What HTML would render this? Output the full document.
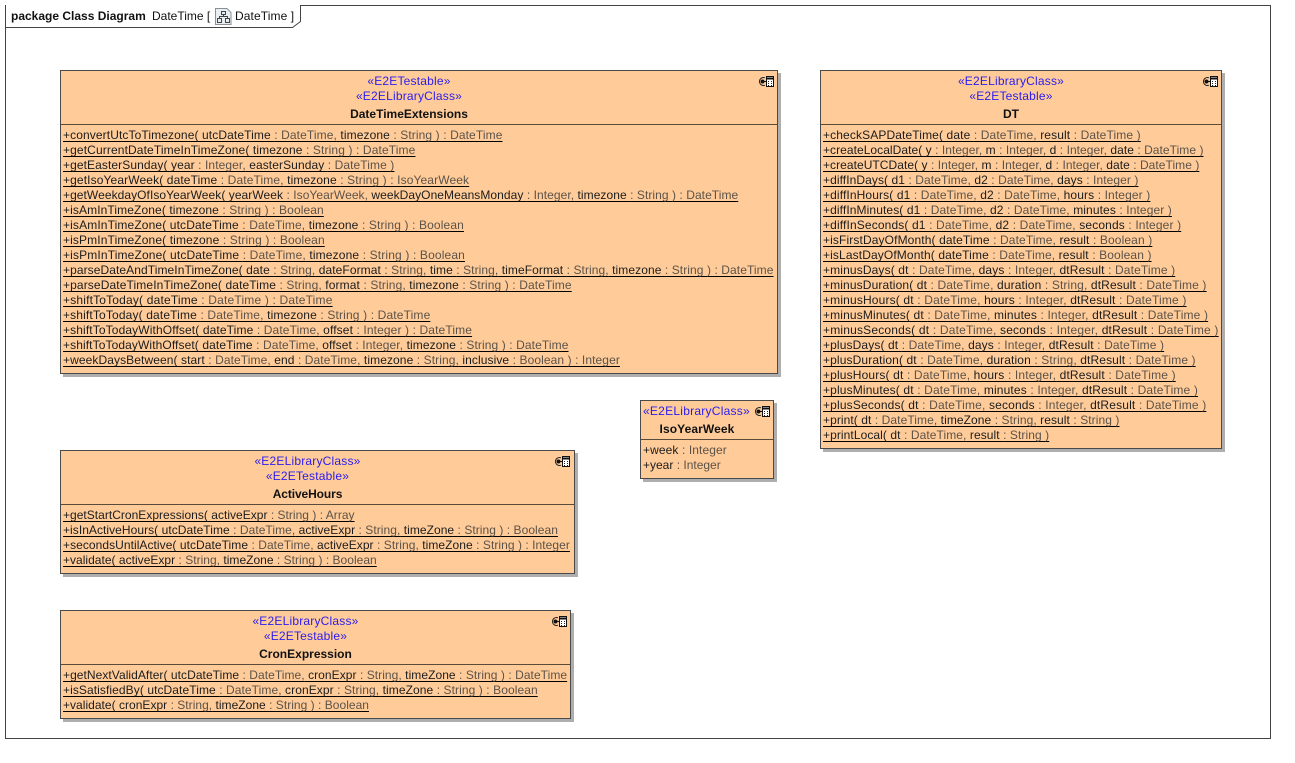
<!DOCTYPE html>
<html><head><meta charset="utf-8">
<style>
html,body{margin:0;padding:0;background:#fff;width:1295px;height:763px;overflow:hidden}
body{position:relative;font-family:"Liberation Sans",Arial,sans-serif;font-size:12px;color:#1c1c1c}
.a{position:absolute;white-space:nowrap}
.box{position:absolute;box-sizing:border-box;background:#ffcc99;border:1px solid #4a4a4a;box-shadow:3px 3px 0 #aeaeae}
.div{position:absolute;left:0;right:0;height:1px;background:#5a4a3a}
.st{position:absolute;left:0;right:20px;text-align:center;color:#2a1cf0;line-height:15px;white-space:nowrap;letter-spacing:.2px}
.nm{position:absolute;left:0;right:20px;text-align:center;font-weight:bold;color:#111;line-height:15px;white-space:nowrap}
.r{position:absolute;left:2px;margin-top:1px;line-height:15px;height:15px;white-space:nowrap;letter-spacing:.105px;text-decoration:underline;text-decoration-color:#000;text-decoration-thickness:1px;text-underline-offset:2px}
.r i{font-style:normal;color:#5c5248}
.n{position:absolute;left:2px;margin-top:1px;line-height:15px;height:15px;white-space:nowrap;letter-spacing:.1px}
.n i{font-style:normal;color:#5c5248}
svg{position:absolute}
</style></head><body>

<div class="a" style="left:5px;top:5px;width:1264px;height:732px;border:1px solid #444"></div>
<svg style="left:5px;top:5px" width="300" height="24"><path d="M0 0H295V16L287 22H0Z" fill="#fff"/><path d="M.5 22.500H287.500L295.500 16.500V.5" fill="none" stroke="#444"/><path d="M.5 0V23" stroke="#444"/></svg>
<div class="a" style="left:11px;top:9px;line-height:15px;font-weight:bold;color:#111">package Class Diagram</div>
<div class="a" style="left:152px;top:9px;line-height:15px;color:#111">DateTime [</div>
<svg style="left:215px;top:8px" width="17" height="17"><path d="M.5.5H12L16 4.500V16.500H.5Z" fill="#e8eef2" stroke="#8a9098"/><path d="M6.500 3.500H10.500V6.500H6.500ZM2.500 10.500H6.500V14.500H2.500ZM10.500 10.500H14.500V14.500H10.500ZM8.500 6.500V8.500H4.500V10.500M8.500 8.500H12.500V10.500" fill="none" stroke="#444"/></svg>
<div class="a" style="left:235px;top:9px;line-height:15px;color:#111;letter-spacing:.1px">DateTime ]</div>

<!-- DateTimeExtensions -->
<div class="box" style="left:60px;top:70px;width:718px;height:304px">
<div class="st" style="top:3px">«E2ETestable»</div>
<div class="st" style="top:18px">«E2ELibraryClass»</div>
<div class="nm" style="top:36px">DateTimeExtensions</div>
<svg style="left:697px;top:5px" width="17" height="13"><use href="#ic"/></svg>
<div class="div" style="top:53px"></div>
<div class="r" style="top:56px">+convertUtcToTimezone( utcDateTime <i>: DateTime,</i> timezone <i>: String ) : DateTime</i></div>
<div class="r" style="top:71px;letter-spacing:.12px">+getCurrentDateTimeInTimeZone( timezone <i>: String ) : DateTime</i></div>
<div class="r" style="top:86px;letter-spacing:.09px">+getEasterSunday( year <i>: Integer,</i> easterSunday <i>: DateTime )</i></div>
<div class="r" style="top:101px;letter-spacing:.12px">+getIsoYearWeek( dateTime <i>: DateTime,</i> timezone <i>: String ) : IsoYearWeek</i></div>
<div class="r" style="top:116px;letter-spacing:.06px">+getWeekdayOfIsoYearWeek( yearWeek <i>: IsoYearWeek,</i> weekDayOneMeansMonday <i>: Integer,</i> timezone <i>: String ) : DateTime</i></div>
<div class="r" style="top:131px">+isAmInTimeZone( timezone <i>: String ) : Boolean</i></div>
<div class="r" style="top:146px;letter-spacing:.13px">+isAmInTimeZone( utcDateTime <i>: DateTime,</i> timezone <i>: String ) : Boolean</i></div>
<div class="r" style="top:161px;letter-spacing:.125px">+isPmInTimeZone( timezone <i>: String ) : Boolean</i></div>
<div class="r" style="top:176px;letter-spacing:.145px">+isPmInTimeZone( utcDateTime <i>: DateTime,</i> timezone <i>: String ) : Boolean</i></div>
<div class="r" style="top:191px;letter-spacing:.08px">+parseDateAndTimeInTimeZone( date <i>: String,</i> dateFormat <i>: String,</i> time <i>: String,</i> timeFormat <i>: String,</i> timezone <i>: String ) : DateTime</i></div>
<div class="r" style="top:206px;letter-spacing:.115px">+parseDateTimeInTimeZone( dateTime <i>: String,</i> format <i>: String,</i> timezone <i>: String ) : DateTime</i></div>
<div class="r" style="top:221px;letter-spacing:.18px">+shiftToToday( dateTime <i>: DateTime ) : DateTime</i></div>
<div class="r" style="top:236px;letter-spacing:.145px">+shiftToToday( dateTime <i>: DateTime,</i> timezone <i>: String ) : DateTime</i></div>
<div class="r" style="top:251px;letter-spacing:.12px">+shiftToTodayWithOffset( dateTime <i>: DateTime,</i> offset <i>: Integer ) : DateTime</i></div>
<div class="r" style="top:266px;letter-spacing:.1px">+shiftToTodayWithOffset( dateTime <i>: DateTime,</i> offset <i>: Integer,</i> timezone <i>: String ) : DateTime</i></div>
<div class="r" style="top:281px;letter-spacing:.09px">+weekDaysBetween( start <i>: DateTime,</i> end <i>: DateTime,</i> timezone <i>: String,</i> inclusive <i>: Boolean ) : Integer</i></div>
</div>

<!-- DT -->
<div class="box" style="left:820px;top:70px;width:402px;height:379px">
<div class="st" style="top:3px">«E2ELibraryClass»</div>
<div class="st" style="top:18px">«E2ETestable»</div>
<div class="nm" style="top:36px">DT</div>
<svg style="left:381px;top:5px" width="17" height="13"><use href="#ic"/></svg>
<div class="div" style="top:53px"></div>
<div class="r" style="top:56px;letter-spacing:.12px">+checkSAPDateTime( date <i>: DateTime,</i> result <i>: DateTime )</i></div>
<div class="r" style="top:71px;letter-spacing:.05px">+createLocalDate( y <i>: Integer,</i> m <i>: Integer,</i> d <i>: Integer,</i> date <i>: DateTime )</i></div>
<div class="r" style="top:86px;letter-spacing:.05px">+createUTCDate( y <i>: Integer,</i> m <i>: Integer,</i> d <i>: Integer,</i> date <i>: DateTime )</i></div>
<div class="r" style="top:101px;letter-spacing:.08px">+diffInDays( d1 <i>: DateTime,</i> d2 <i>: DateTime,</i> days <i>: Integer )</i></div>
<div class="r" style="top:116px;letter-spacing:.12px">+diffInHours( d1 <i>: DateTime,</i> d2 <i>: DateTime,</i> hours <i>: Integer )</i></div>
<div class="r" style="top:131px">+diffInMinutes( d1 <i>: DateTime,</i> d2 <i>: DateTime,</i> minutes <i>: Integer )</i></div>
<div class="r" style="top:146px;letter-spacing:.135px">+diffInSeconds( d1 <i>: DateTime,</i> d2 <i>: DateTime,</i> seconds <i>: Integer )</i></div>
<div class="r" style="top:161px;letter-spacing:.12px">+isFirstDayOfMonth( dateTime <i>: DateTime,</i> result <i>: Boolean )</i></div>
<div class="r" style="top:176px;letter-spacing:.12px">+isLastDayOfMonth( dateTime <i>: DateTime,</i> result <i>: Boolean )</i></div>
<div class="r" style="top:191px;letter-spacing:.135px">+minusDays( dt <i>: DateTime,</i> days <i>: Integer,</i> dtResult <i>: DateTime )</i></div>
<div class="r" style="top:206px;letter-spacing:.13px">+minusDuration( dt <i>: DateTime,</i> duration <i>: String,</i> dtResult <i>: DateTime )</i></div>
<div class="r" style="top:221px;letter-spacing:.16px">+minusHours( dt <i>: DateTime,</i> hours <i>: Integer,</i> dtResult <i>: DateTime )</i></div>
<div class="r" style="top:236px;letter-spacing:.145px">+minusMinutes( dt <i>: DateTime,</i> minutes <i>: Integer,</i> dtResult <i>: DateTime )</i></div>
<div class="r" style="top:251px;letter-spacing:.19px">+minusSeconds( dt <i>: DateTime,</i> seconds <i>: Integer,</i> dtResult <i>: DateTime )</i></div>
<div class="r" style="top:266px;letter-spacing:.12px">+plusDays( dt <i>: DateTime,</i> days <i>: Integer,</i> dtResult <i>: DateTime )</i></div>
<div class="r" style="top:281px;letter-spacing:.12px">+plusDuration( dt <i>: DateTime,</i> duration <i>: String,</i> dtResult <i>: DateTime )</i></div>
<div class="r" style="top:296px;letter-spacing:.15px">+plusHours( dt <i>: DateTime,</i> hours <i>: Integer,</i> dtResult <i>: DateTime )</i></div>
<div class="r" style="top:311px;letter-spacing:.145px">+plusMinutes( dt <i>: DateTime,</i> minutes <i>: Integer,</i> dtResult <i>: DateTime )</i></div>
<div class="r" style="top:326px;letter-spacing:.16px">+plusSeconds( dt <i>: DateTime,</i> seconds <i>: Integer,</i> dtResult <i>: DateTime )</i></div>
<div class="r" style="top:341px;letter-spacing:.075px">+print( dt <i>: DateTime,</i> timeZone <i>: String,</i> result <i>: String )</i></div>
<div class="r" style="top:356px;letter-spacing:.08px">+printLocal( dt <i>: DateTime,</i> result <i>: String )</i></div>
</div>

<!-- IsoYearWeek -->
<div class="box" style="left:640px;top:400px;width:134px;height:79px">
<div class="st" style="top:3px;left:2px;right:auto;letter-spacing:.25px">«E2ELibraryClass»</div>
<div class="nm" style="top:21px;right:20px;letter-spacing:.1px">IsoYearWeek</div>
<svg style="left:113px;top:5px" width="17" height="13"><use href="#ic"/></svg>
<div class="div" style="top:38px"></div>
<div class="n" style="top:41px">+week <i>: Integer</i></div>
<div class="n" style="top:56px;letter-spacing:0">+year <i>: Integer</i></div>
</div>

<!-- ActiveHours -->
<div class="box" style="left:60px;top:450px;width:515px;height:124px">
<div class="st" style="top:3px">«E2ELibraryClass»</div>
<div class="st" style="top:18px">«E2ETestable»</div>
<div class="nm" style="top:36px;letter-spacing:-.1px">ActiveHours</div>
<svg style="left:493px;top:5px" width="17" height="13"><use href="#ic"/></svg>
<div class="div" style="top:53px"></div>
<div class="r" style="top:56px;letter-spacing:.02px">+getStartCronExpressions( activeExpr <i>: String ) : Array</i></div>
<div class="r" style="top:71px;letter-spacing:.05px">+isInActiveHours( utcDateTime <i>: DateTime,</i> activeExpr <i>: String,</i> timeZone <i>: String ) : Boolean</i></div>
<div class="r" style="top:86px;letter-spacing:.055px">+secondsUntilActive( utcDateTime <i>: DateTime,</i> activeExpr <i>: String,</i> timeZone <i>: String ) : Integer</i></div>
<div class="r" style="top:101px;letter-spacing:.02px">+validate( activeExpr <i>: String,</i> timeZone <i>: String ) : Boolean</i></div>
</div>

<!-- CronExpression -->
<div class="box" style="left:60px;top:610px;width:511px;height:109px">
<div class="st" style="top:3px">«E2ELibraryClass»</div>
<div class="st" style="top:18px">«E2ETestable»</div>
<div class="nm" style="top:36px">CronExpression</div>
<svg style="left:490px;top:5px" width="17" height="13"><use href="#ic"/></svg>
<div class="div" style="top:53px"></div>
<div class="r" style="top:56px;letter-spacing:.055px">+getNextValidAfter( utcDateTime <i>: DateTime,</i> cronExpr <i>: String,</i> timeZone <i>: String ) : DateTime</i></div>
<div class="r" style="top:71px;letter-spacing:.08px">+isSatisfiedBy( utcDateTime <i>: DateTime,</i> cronExpr <i>: String,</i> timeZone <i>: String ) : Boolean</i></div>
<div class="r" style="top:86px;letter-spacing:.025px">+validate( cronExpr <i>: String,</i> timeZone <i>: String ) : Boolean</i></div>
</div>

<svg width="0" height="0" style="left:0;top:0"><defs><g id="ic">
<path d="M7 1.800A4 4 0 1 0 7 9.200" fill="none" stroke="#222"/>
<circle cx="4.500" cy="5.500" r="2" fill="#111"/>
<path d="M4.500 5.500H8" stroke="#111"/>
<path d="M8.500 .5H15.500V10.500H8.500Z" fill="#fff" stroke="#111"/>
<path d="M8.500 2.500H15.500" stroke="#111" stroke-width="2"/>
<path d="M10 5.500h1M13 5.500h1M10 7.500h1M13 7.500h1M10 9.500h1M13 9.500h1" stroke="#222"/>
</g></defs></svg>
</body></html>
